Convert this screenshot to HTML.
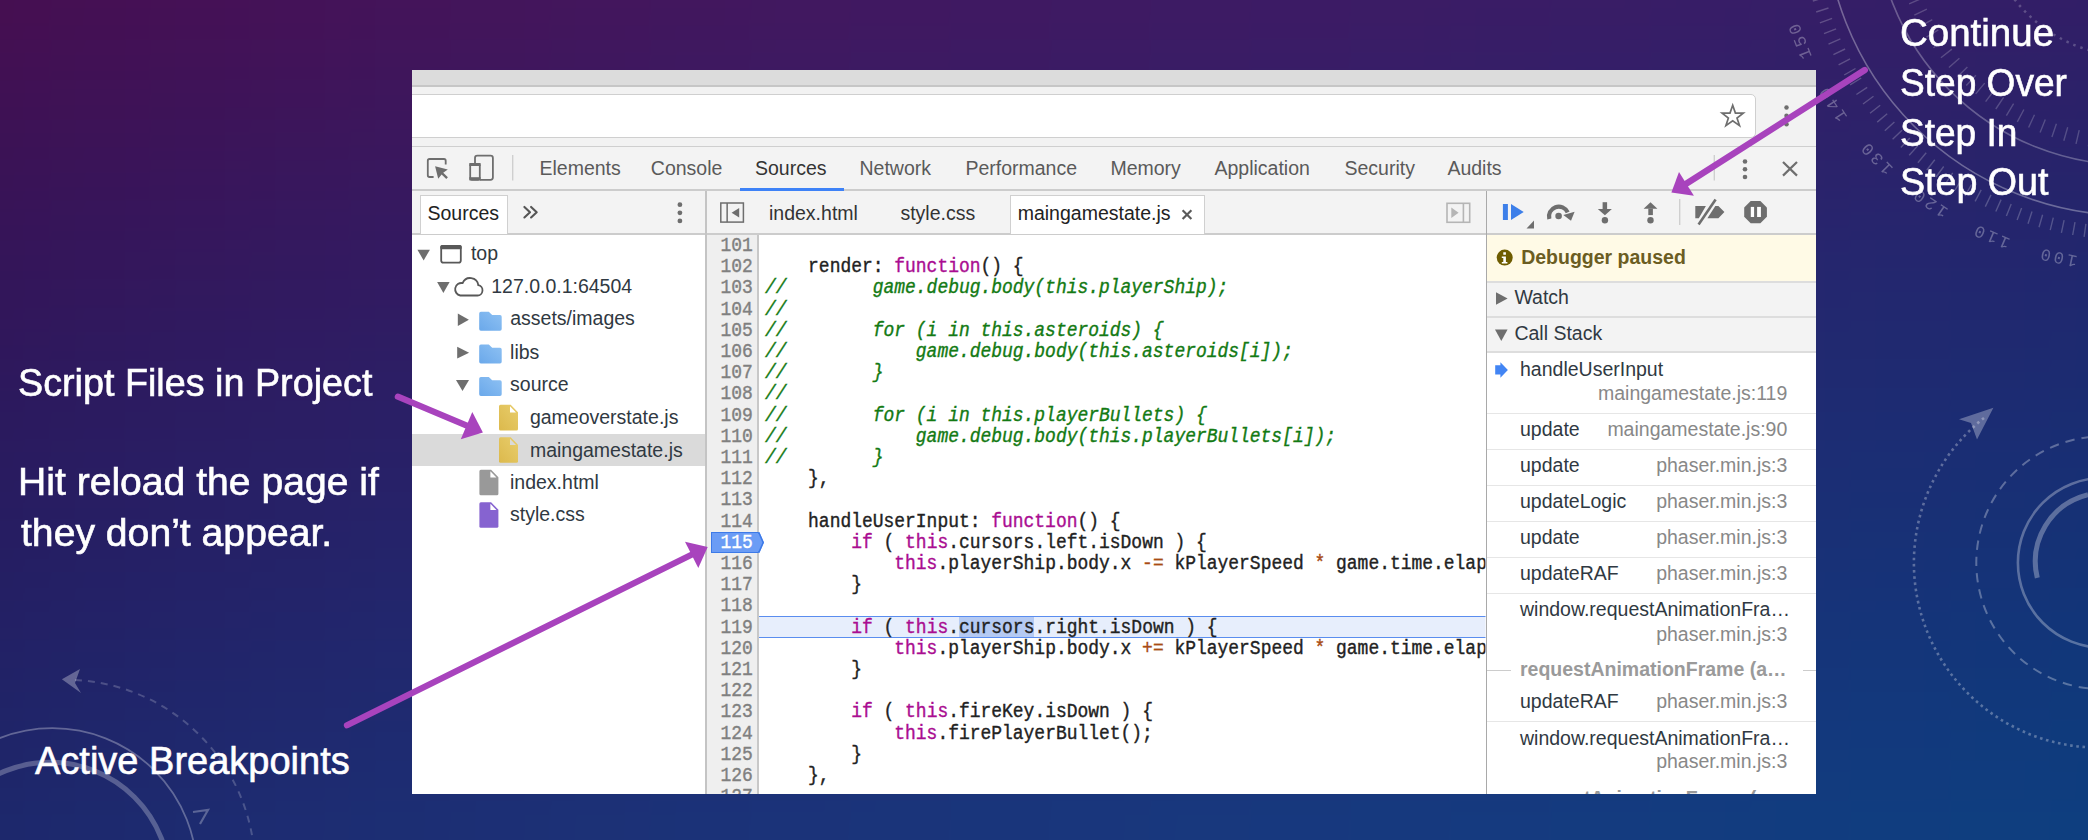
<!DOCTYPE html>
<html><head><meta charset="utf-8">
<style>
*{box-sizing:border-box;margin:0;padding:0}
html,body{width:2088px;height:840px;overflow:hidden}
body{position:relative;font-family:"Liberation Sans",sans-serif;
 background:linear-gradient(168deg,#3f1052 0%,#3e1762 20%,#2f1c66 38%,#241f68 50%,#1f2a6e 64%,#163478 75%,#13387c 82%,#133a7e 100%);}
.a{position:absolute}
.t{position:absolute;white-space:nowrap;line-height:1}
#dt{position:absolute;left:0;top:0;width:2088px;height:840px;clip-path:inset(70px 272px 46px 412px)}
.ui{font-size:19.5px;color:#303942}
.slide{position:absolute;white-space:nowrap;color:#fff;line-height:1;transform-origin:0 0;-webkit-text-stroke:0.6px #fff}
.cl{position:absolute;left:765px;font:17.97px/21.2px "Liberation Mono",monospace;white-space:pre;color:#222;-webkit-text-stroke:0.35px currentColor;margin-top:0.5px;transform:scaleY(1.12);transform-origin:0 15.3px}
.ln{position:absolute;left:700px;width:52.75px;text-align:right;font:17.97px/21.2px "Liberation Mono",monospace;white-space:pre;color:#808080;-webkit-text-stroke:0.35px currentColor;margin-top:0.5px;transform:scaleY(1.12);transform-origin:0 15.3px}
.k{color:#aa0d91}.c{color:#137a13;font-style:italic}.o{color:#a84b14}
#bg i{position:absolute;left:0;width:2400px;height:40px;display:block}
</style></head><body>

<div id="bg" style="position:absolute;left:-100px;top:-120px;width:2400px;height:1080px;filter:blur(22px)"><i style="top:0px;background:linear-gradient(to right,#460e51 0px,#460e51 100px,#460f53 200px,#461155 300px,#451257 400px,#451359 500px,#44145b 600px,#44155c 700px,#43165e 800px,#42175f 900px,#411860 1000px,#401961 1100px,#3f1962 1200px,#3e1a63 1300px,#3d1b64 1400px,#3c1b65 1500px,#3b1c65 1600px,#3a1c66 1700px,#381d66 1800px,#371d66 1900px,#351d66 2000px,#341e66 2100px,#321e66 2200px,#321e66 2300px,#321e66 2400px)"></i><i style="top:40px;background:linear-gradient(to right,#460e51 0px,#460e51 100px,#460f53 200px,#461155 300px,#451257 400px,#451359 500px,#44145b 600px,#44155c 700px,#43165e 800px,#42175f 900px,#411860 1000px,#401961 1100px,#3f1962 1200px,#3e1a63 1300px,#3d1b64 1400px,#3c1b65 1500px,#3b1c65 1600px,#3a1c66 1700px,#381d66 1800px,#371d66 1900px,#351d66 2000px,#341e66 2100px,#321e66 2200px,#321e66 2300px,#321e66 2400px)"></i><i style="top:80px;background:linear-gradient(to right,#460e51 0px,#460e51 100px,#460f53 200px,#461155 300px,#451257 400px,#451359 500px,#44145b 600px,#44155c 700px,#43165e 800px,#42175f 900px,#411860 1000px,#401961 1100px,#3f1962 1200px,#3e1a63 1300px,#3d1b64 1400px,#3c1b65 1500px,#3b1c65 1600px,#3a1c66 1700px,#381d66 1800px,#371d66 1900px,#351d66 2000px,#341e66 2100px,#321e66 2200px,#321e66 2300px,#321e66 2400px)"></i><i style="top:120px;background:linear-gradient(to right,#450f51 0px,#450f51 100px,#441054 200px,#441156 300px,#441258 400px,#43145a 500px,#43155b 600px,#42165d 700px,#41175e 800px,#411860 900px,#401861 1000px,#3f1962 1100px,#3e1a63 1200px,#3d1b64 1300px,#3c1b65 1400px,#3b1c65 1500px,#391c66 1600px,#381d66 1700px,#371d67 1800px,#351e67 1900px,#341e67 2000px,#321e67 2100px,#311e67 2200px,#311e67 2300px,#311e67 2400px)"></i><i style="top:160px;background:linear-gradient(to right,#421053 0px,#421053 100px,#411155 200px,#411257 300px,#411359 400px,#40155b 500px,#40165c 600px,#3f175e 700px,#3e1860 800px,#3e1961 900px,#3d1a62 1000px,#3c1a63 1100px,#3b1b64 1200px,#3a1c65 1300px,#391c66 1400px,#381d67 1500px,#361e67 1600px,#351e68 1700px,#341f68 1800px,#321f68 1900px,#311f68 2000px,#2f2068 2100px,#2e2068 2200px,#2e2068 2300px,#2e2068 2400px)"></i><i style="top:200px;background:linear-gradient(to right,#3f1154 0px,#3f1154 100px,#3f1256 200px,#3e1358 300px,#3e145a 400px,#3d165c 500px,#3d175e 600px,#3c185f 700px,#3c1961 800px,#3b1a62 900px,#3a1b63 1000px,#391b64 1100px,#381c65 1200px,#371d66 1300px,#361e67 1400px,#351e68 1500px,#341f68 1600px,#321f69 1700px,#312069 1800px,#302069 1900px,#2e2169 2000px,#2d2169 2100px,#2b2169 2200px,#2b2169 2300px,#2b2169 2400px)"></i><i style="top:240px;background:linear-gradient(to right,#3c1255 0px,#3c1255 100px,#3c1357 200px,#3b1459 300px,#3b165b 400px,#3b175d 500px,#3a185f 600px,#391960 700px,#391a62 800px,#381b63 900px,#371c64 1000px,#361d66 1100px,#351d67 1200px,#341e67 1300px,#331f68 1400px,#322069 1500px,#312069 1600px,#30216a 1700px,#2e216a 1800px,#2d226a 1900px,#2c226a 2000px,#2a226a 2100px,#29226a 2200px,#29226a 2300px,#29226a 2400px)"></i><i style="top:280px;background:linear-gradient(to right,#391356 0px,#391356 100px,#391459 200px,#39155b 300px,#38175d 400px,#38185e 500px,#371960 600px,#371a62 700px,#361b63 800px,#351c64 900px,#351d66 1000px,#341e67 1100px,#331f68 1200px,#321f69 1300px,#312069 1400px,#30216a 1500px,#2f216b 1600px,#2d226b 1700px,#2c226b 1800px,#2b236b 1900px,#29236c 2000px,#27246b 2100px,#26246b 2200px,#26246b 2300px,#26246b 2400px)"></i><i style="top:320px;background:linear-gradient(to right,#371458 0px,#371458 100px,#36155a 200px,#36165c 300px,#36185e 400px,#351960 500px,#351a61 600px,#341b63 700px,#341c64 800px,#331d66 900px,#321e67 1000px,#311f68 1100px,#302069 1200px,#2f216a 1300px,#2e216b 1400px,#2d226b 1500px,#2c236c 1600px,#2b236c 1700px,#2a246c 1800px,#28246d 1900px,#27256d 2000px,#25256d 2100px,#24256c 2200px,#24256c 2300px,#24256c 2400px)"></i><i style="top:360px;background:linear-gradient(to right,#341559 0px,#341559 100px,#34165b 200px,#34185d 300px,#33195f 400px,#331a61 500px,#321b63 600px,#321c64 700px,#311e66 800px,#311f67 900px,#302068 1000px,#2f2069 1100px,#2e216a 1200px,#2d226b 1300px,#2c236c 1400px,#2b236c 1500px,#2a246d 1600px,#29256d 1700px,#27256e 1800px,#26266e 1900px,#24266e 2000px,#23266e 2100px,#21276e 2200px,#21276e 2300px,#21276e 2400px)"></i><i style="top:400px;background:linear-gradient(to right,#32165a 0px,#32165a 100px,#32175c 200px,#31195e 300px,#311a60 400px,#311b62 500px,#301d64 600px,#301e65 700px,#2f1f67 800px,#2e2068 900px,#2e2169 1000px,#2d226a 1100px,#2c236b 1200px,#2b236c 1300px,#2a246d 1400px,#29256e 1500px,#28256e 1600px,#26266f 1700px,#25276f 1800px,#24276f 1900px,#22286f 2000px,#21286f 2100px,#1f286f 2200px,#1f286f 2300px,#1f286f 2400px)"></i><i style="top:440px;background:linear-gradient(to right,#30175b 0px,#30175b 100px,#2f195e 200px,#2f1a60 300px,#2f1b62 400px,#2e1d63 500px,#2e1e65 600px,#2d1f67 700px,#2d2068 800px,#2c2169 900px,#2b226b 1000px,#2b236c 1100px,#2a246d 1200px,#29256e 1300px,#28266e 1400px,#27266f 1500px,#25276f 1600px,#242870 1700px,#232870 1800px,#222970 1900px,#202970 2000px,#1f2970 2100px,#1d2a70 2200px,#1d2a70 2300px,#1d2a70 2400px)"></i><i style="top:480px;background:linear-gradient(to right,#2d185d 0px,#2d185d 100px,#2d1a5f 200px,#2d1b61 300px,#2d1d63 400px,#2c1e65 500px,#2c1f66 600px,#2b2068 700px,#2b2169 800px,#2a226b 900px,#29236c 1000px,#29246d 1100px,#28256e 1200px,#27266f 1300px,#262770 1400px,#252870 1500px,#232871 1600px,#222971 1700px,#212a71 1800px,#202a71 1900px,#1e2a71 2000px,#1d2b71 2100px,#1b2b71 2200px,#1b2b71 2300px,#1b2b71 2400px)"></i><i style="top:520px;background:linear-gradient(to right,#2b1a5e 0px,#2b1a5e 100px,#2b1b60 200px,#2b1d62 300px,#2b1e64 400px,#2a1f66 500px,#2a2068 600px,#292269 700px,#29236b 800px,#28246c 900px,#27256d 1000px,#27266e 1100px,#26276f 1200px,#252870 1300px,#242871 1400px,#232971 1500px,#222a72 1600px,#202a72 1700px,#1f2b73 1800px,#1e2c73 1900px,#1c2c73 2000px,#1b2c73 2100px,#1a2d72 2200px,#1a2d72 2300px,#1a2d72 2400px)"></i><i style="top:560px;background:linear-gradient(to right,#291b5f 0px,#291b5f 100px,#291c62 200px,#291e64 300px,#291f65 400px,#282067 500px,#282269 600px,#27236a 700px,#27246c 800px,#26256d 900px,#26266e 1000px,#25276f 1100px,#242870 1200px,#232971 1300px,#222a72 1400px,#212b73 1500px,#202b73 1600px,#1f2c73 1700px,#1d2d74 1800px,#1c2d74 1900px,#1b2e74 2000px,#192e74 2100px,#182e74 2200px,#182e74 2300px,#182e74 2400px)"></i><i style="top:600px;background:linear-gradient(to right,#281c61 0px,#281c61 100px,#281e63 200px,#271f65 300px,#272167 400px,#272269 500px,#26236a 600px,#26246c 700px,#25266d 800px,#25276e 900px,#242870 1000px,#232971 1100px,#222a72 1200px,#212b73 1300px,#202b73 1400px,#1f2c74 1500px,#1e2d74 1600px,#1d2e75 1700px,#1c2e75 1800px,#1a2f75 1900px,#192f75 2000px,#183075 2100px,#163075 2200px,#163075 2300px,#163075 2400px)"></i><i style="top:640px;background:linear-gradient(to right,#261d62 0px,#261d62 100px,#261f64 200px,#262066 300px,#252268 400px,#25236a 500px,#25256c 600px,#24266d 700px,#24276e 800px,#232870 900px,#222971 1000px,#212a72 1100px,#212b73 1200px,#202c74 1300px,#1f2d75 1400px,#1e2e75 1500px,#1d2e76 1600px,#1b2f76 1700px,#1a3076 1800px,#193076 1900px,#183176 2000px,#163176 2100px,#153276 2200px,#153276 2300px,#153276 2400px)"></i><i style="top:680px;background:linear-gradient(to right,#241f63 0px,#241f63 100px,#242066 200px,#242268 300px,#242369 400px,#23256b 500px,#23266d 600px,#23276e 700px,#222870 800px,#212a71 900px,#212b72 1000px,#202c73 1100px,#1f2d74 1200px,#1e2e75 1300px,#1d2e76 1400px,#1c2f76 1500px,#1b3077 1600px,#1a3177 1700px,#193178 1800px,#183278 1900px,#163278 2000px,#153378 2100px,#133377 2200px,#133377 2300px,#133377 2400px)"></i><i style="top:720px;background:linear-gradient(to right,#232065 0px,#232065 100px,#232267 200px,#232369 300px,#22256b 400px,#22266d 500px,#22276e 600px,#212970 700px,#212a71 800px,#202b72 900px,#1f2c74 1000px,#1f2d75 1100px,#1e2e76 1200px,#1d2f76 1300px,#1c3077 1400px,#1b3178 1500px,#1a3278 1600px,#193279 1700px,#183379 1800px,#163479 1900px,#153479 2000px,#133579 2100px,#123579 2200px,#123579 2300px,#123579 2400px)"></i><i style="top:760px;background:linear-gradient(to right,#222266 0px,#222266 100px,#212368 200px,#21256a 300px,#21266c 400px,#21286e 500px,#202970 600px,#202a71 700px,#1f2b72 800px,#1f2d74 900px,#1e2e75 1000px,#1d2f76 1100px,#1d3077 1200px,#1c3178 1300px,#1b3278 1400px,#1a3379 1500px,#19337a 1600px,#18347a 1700px,#16357a 1800px,#15357a 1900px,#14367a 2000px,#12367a 2100px,#11377a 2200px,#11377a 2300px,#11377a 2400px)"></i><i style="top:800px;background:linear-gradient(to right,#202367 0px,#202367 100px,#20256a 200px,#20266c 300px,#20286d 400px,#1f296f 500px,#1f2a71 600px,#1f2c72 700px,#1e2d74 800px,#1e2e75 900px,#1d2f76 1000px,#1c3077 1100px,#1b3178 1200px,#1b3279 1300px,#1a337a 1400px,#19347a 1500px,#18357b 1600px,#16367b 1700px,#15367b 1800px,#14377c 1900px,#13387c 2000px,#11387b 2100px,#10397b 2200px,#10397b 2300px,#10397b 2400px)"></i><i style="top:840px;background:linear-gradient(to right,#1f2569 0px,#1f2569 100px,#1f266b 200px,#1f286d 300px,#1f296f 400px,#1e2b71 500px,#1e2c72 600px,#1e2d74 700px,#1d2f75 800px,#1d3076 900px,#1c3178 1000px,#1b3279 1100px,#1a337a 1200px,#1a347a 1300px,#19357b 1400px,#18367c 1500px,#17377c 1600px,#15377c 1700px,#14387d 1800px,#13397d 1900px,#12397d 2000px,#103a7d 2100px,#0f3a7c 2200px,#0f3a7c 2300px,#0f3a7c 2400px)"></i><i style="top:880px;background:linear-gradient(to right,#1e266a 0px,#1e266a 100px,#1e286c 200px,#1e296e 300px,#1e2b70 400px,#1d2c72 500px,#1d2e74 600px,#1d2f75 700px,#1c3077 800px,#1c3178 900px,#1b3379 1000px,#1a347a 1100px,#19357b 1200px,#19367c 1300px,#18377c 1400px,#17387d 1500px,#16387d 1600px,#15397e 1700px,#133a7e 1800px,#123b7e 1900px,#113b7e 2000px,#103c7e 2100px,#0e3c7e 2200px,#0e3c7e 2300px,#0e3c7e 2400px)"></i><i style="top:920px;background:linear-gradient(to right,#1d286c 0px,#1d286c 100px,#1d296e 200px,#1d2b70 300px,#1d2c72 400px,#1c2e73 500px,#1c2f75 600px,#1c3176 700px,#1b3278 800px,#1b3379 900px,#1a347a 1000px,#19357b 1100px,#19367c 1200px,#18387d 1300px,#17387e 1400px,#16397e 1500px,#153a7f 1600px,#143b7f 1700px,#133c7f 1800px,#113c7f 1900px,#103d7f 2000px,#0f3e7f 2100px,#0e3e7f 2200px,#0e3e7f 2300px,#0e3e7f 2400px)"></i><i style="top:960px;background:linear-gradient(to right,#1d286c 0px,#1d286c 100px,#1d2a6e 200px,#1d2c70 300px,#1c2d72 400px,#1c2f74 500px,#1c3076 600px,#1b3177 700px,#1b3379 800px,#1a347a 900px,#1a357b 1000px,#19367c 1100px,#18377d 1200px,#17387e 1300px,#17397e 1400px,#163a7f 1500px,#153b7f 1600px,#143c80 1700px,#123d80 1800px,#113d80 1900px,#103e80 2000px,#0e3f80 2100px,#0d3f80 2200px,#0d3f80 2300px,#0d3f80 2400px)"></i><i style="top:1000px;background:linear-gradient(to right,#1d286c 0px,#1d286c 100px,#1d2a6e 200px,#1d2c70 300px,#1c2d72 400px,#1c2f74 500px,#1c3076 600px,#1b3177 700px,#1b3379 800px,#1a347a 900px,#1a357b 1000px,#19367c 1100px,#18377d 1200px,#17387e 1300px,#17397e 1400px,#163a7f 1500px,#153b7f 1600px,#143c80 1700px,#123d80 1800px,#113d80 1900px,#103e80 2000px,#0e3f80 2100px,#0d3f80 2200px,#0d3f80 2300px,#0d3f80 2400px)"></i></div>
<svg id="deco" class="a" style="left:0;top:0" width="2088" height="840">
 <g fill="none" stroke="#fff">
  <circle cx="2130" cy="-90" r="305.5" stroke-width="1.6" opacity="0.32"/>
  <circle cx="2130" cy="-90" r="255" stroke-width="1.6" opacity="0.28"/>
  <circle cx="2130" cy="-90" r="146" stroke-width="2.5" stroke-dasharray="2.5 5" opacity="0.22"/>
  <path d="M1816.1 -45.9L1803.2 -44.1 M1817.8 -35.0L1805.0 -32.7 M1819.9 -24.1L1807.2 -21.4 M1822.4 -13.3L1809.8 -10.2 M1825.3 -2.6L1812.8 1.0 M1828.5 8.0L1816.2 12.0 M1832.1 18.4L1819.9 22.9 M1836.1 28.8L1824.0 33.6 M1840.4 38.9L1828.5 44.2 M1845.1 49.0L1833.4 54.7 M1850.1 58.8L1838.6 64.9 M1855.5 68.5L1844.2 75.0 M1861.2 78.0L1850.1 84.9 M1867.2 87.3L1856.4 94.5 M1873.5 96.3L1863.0 104.0 M1880.2 105.2L1870.0 113.2 M1887.2 113.8L1877.2 122.1 M1894.4 122.1L1884.8 130.8 M1902.0 130.2L1892.6 139.2 M1909.8 138.0L1900.8 147.4 M1917.9 145.6L1909.2 155.2 M1926.2 152.8L1917.9 162.8 M1934.8 159.8L1926.8 170.0 M1943.7 166.5L1936.0 177.0 M1952.7 172.8L1945.5 183.6 M1962.0 178.8L1955.1 189.9 M1971.5 184.5L1965.0 195.8 M1981.2 189.9L1975.1 201.4 M1991.0 194.9L1985.3 206.6 M2001.1 199.6L1995.8 211.5 M2011.2 203.9L2006.4 216.0 M2021.6 207.9L2017.1 220.1 M2032.0 211.5L2028.0 223.8 M2042.6 214.7L2039.0 227.2 M2053.3 217.6L2050.2 230.2 M2064.1 220.1L2061.4 232.8 M2075.0 222.2L2072.7 235.0 M2085.9 223.9L2084.1 236.8" stroke-width="1.4" opacity="0.22"/>
  <path d="M1904.1 -82.1L1890.1 -81.6 M1904.9 -70.3L1890.9 -69.1 M1906.2 -58.5L1892.3 -56.6 M1908.2 -46.9L1894.4 -44.2 M1910.7 -35.3L1897.1 -31.9 M1913.9 -23.9L1900.5 -19.8 M1917.6 -12.7L1904.5 -7.9 M1922.0 -1.7L1909.1 3.8 M1926.9 9.1L1914.3 15.2 M1932.3 19.6L1920.1 26.4 M1938.3 29.8L1926.5 37.2 M1944.9 39.6L1933.4 47.7 M1951.9 49.1L1940.9 57.8 M1959.4 58.3L1948.9 67.5 M1967.4 67.0L1957.4 76.7 M1975.9 75.3L1966.3 85.5 M1984.7 83.1L1975.7 93.9 M1994.0 90.5L1985.6 101.7 M2003.6 97.4L1995.8 109.0 M2013.6 103.7L2006.4 115.7 M2023.9 109.5L2017.3 121.9 M2034.5 114.8L2028.6 127.5 M2045.3 119.5L2040.1 132.5 M2056.4 123.7L2051.9 136.9 M2067.7 127.2L2063.8 140.7 M2079.2 130.2L2076.0 143.8 M2090.8 132.6L2088.3 146.4 M2102.5 134.3L2100.8 148.2" stroke-width="1.4" opacity="0.2"/>
  <circle cx="2102.7" cy="562.8" r="84.8" stroke-width="2.6" opacity="0.3"/>
  <path d="M2037.3 577.9A69 69 0 0 1 2088 494.6" stroke-width="5" opacity="0.3"/>
  <circle cx="2102.7" cy="562.8" r="126.4" stroke-width="2" stroke-dasharray="9.4 7" opacity="0.3"/>
  <path d="M1984 418A184.7 184.7 0 0 0 2102.7 747.5" stroke-width="2.6" stroke-dasharray="2.6 3.6" opacity="0.3"/>
  <circle cx="52.4" cy="872.7" r="144.5" stroke-width="1.8" opacity="0.3"/>
  <circle cx="50.1" cy="881.7" r="119.4" stroke-width="5" opacity="0.26"/>
  <path d="M75 680A189 189 0 0 1 255 869" stroke-width="2" stroke-dasharray="7 6" opacity="0.2"/>
  <path d="M193 812L208 810L200 824" stroke-width="2.2" opacity="0.28"/>
 </g>
 <g fill="#fff" opacity="0.3">
  <path d="M1993.4 407.7L1959 419.3L1971 423L1977 439.4Z"/>
  <path d="M61.9 679.3L80 669L75 683L81 693Z"/>
 </g>
 <g fill="#fff" opacity="0.3" font-family="Liberation Mono" font-size="17"><text x="1800.6" y="39.7" transform="rotate(248.5 1800.6 39.7)" text-anchor="middle" dominant-baseline="middle" letter-spacing="3">150</text><text x="1833.1" y="102.8" transform="rotate(237.0 1833.1 102.8)" text-anchor="middle" dominant-baseline="middle" letter-spacing="3">140</text><text x="1876.6" y="157.2" transform="rotate(225.7 1876.6 157.2)" text-anchor="middle" dominant-baseline="middle" letter-spacing="3">130</text><text x="1930.0" y="202.1" transform="rotate(214.4 1930.0 202.1)" text-anchor="middle" dominant-baseline="middle" letter-spacing="3">120</text><text x="1991.1" y="235.6" transform="rotate(203.1 1991.1 235.6)" text-anchor="middle" dominant-baseline="middle" letter-spacing="3">110</text><text x="2057.6" y="256.5" transform="rotate(191.8 2057.6 256.5)" text-anchor="middle" dominant-baseline="middle" letter-spacing="3">100</text></g>
</svg>

<!-- slide texts -->
<div class="slide" style="left:18.3px;top:363.8px;font-size:38px;transform:scaleX(0.993)">Script Files in Project</div>
<div class="slide" style="left:17.8px;top:462.8px;font-size:38px;transform:scaleX(1.029)">Hit reload the page if</div>
<div class="slide" style="left:20.5px;top:513.8px;font-size:38px;transform:scaleX(1.03)">they don’t appear.</div>
<div class="slide" style="left:35px;top:741.8px;font-size:38px;transform:scaleX(1.0)">Active Breakpoints</div>
<div class="slide" style="left:1900px;top:14.1px;font-size:38px;transform:scaleX(1.013)">Continue</div>
<div class="slide" style="left:1900px;top:64.1px;font-size:38px;transform:scaleX(0.976)">Step Over</div>
<div class="slide" style="left:1900px;top:114.1px;font-size:38px;transform:scaleX(0.975)">Step In</div>
<div class="slide" style="left:1900px;top:162.8px;font-size:38px;transform:scaleX(0.99)">Step Out</div>

<div id="dt">
 <div class="a" style="left:412px;top:70px;width:1404px;height:724px;background:#fff"></div>
 <!-- chrome top -->
 <div class="a" style="left:412px;top:70px;width:1404px;height:15px;background:#dcdcdc"></div>
 <div class="a" style="left:412px;top:85px;width:1404px;height:1.5px;background:#c6c6c6"></div>
 <div class="a" style="left:412px;top:86.5px;width:1404px;height:60px;background:#f2f2f2"></div>
 <div class="a" style="left:380px;top:94px;width:1376px;height:44px;background:#fff;border:1px solid #cfcfcf;border-radius:5px"></div>
 <div class="a" style="left:412px;top:146px;width:1404px;height:1px;background:#cfcfcf"></div>
 <!-- toolbar -->
 <div class="a" style="left:412px;top:147px;width:1404px;height:42px;background:#f3f3f3"></div>
 <div class="a" style="left:412px;top:189px;width:1404px;height:1.5px;background:#cccccc"></div>
 <div class="a" style="left:739.5px;top:188px;width:104px;height:2.5px;background:#3e82f7"></div>
 <div class="t ui" style="left:539.5px;top:158.5px;color:#5a5a5a">Elements</div>
 <div class="t ui" style="left:650.8px;top:158.5px;color:#5a5a5a">Console</div>
 <div class="t ui" style="left:755px;top:158.5px;color:#333">Sources</div>
 <div class="t ui" style="left:859.5px;top:158.5px;color:#5a5a5a">Network</div>
 <div class="t ui" style="left:965.4px;top:158.5px;color:#5a5a5a">Performance</div>
 <div class="t ui" style="left:1110.4px;top:158.5px;color:#5a5a5a">Memory</div>
 <div class="t ui" style="left:1214.5px;top:158.5px;color:#5a5a5a">Application</div>
 <div class="t ui" style="left:1344.5px;top:158.5px;color:#5a5a5a">Security</div>
 <div class="t ui" style="left:1447.4px;top:158.5px;color:#5a5a5a">Audits</div>

 <!-- second header row -->
 <div class="a" style="left:412px;top:190.5px;width:1404px;height:43px;background:#f3f3f3"></div>
 <div class="a" style="left:412px;top:233px;width:1404px;height:1.5px;background:#cccccc"></div>
 <div class="a" style="left:419.5px;top:194.5px;width:88.5px;height:39px;background:#fff;border:1px solid #d0d0d0;border-bottom:none"></div>
 <div class="t ui" style="left:427.5px;top:204.2px;color:#222">Sources</div>
 <div class="a" style="left:1010px;top:194.5px;width:194.5px;height:39px;background:#fff;border:1px solid #d0d0d0;border-bottom:none"></div>
 <div class="t ui" style="left:769px;top:204.2px;color:#333">index.html</div>
 <div class="t ui" style="left:900.4px;top:204.2px;color:#333">style.css</div>
 <div class="t ui" style="left:1017.7px;top:204.2px;color:#222">maingamestate.js</div>

 <!-- panel dividers -->
 <div class="a" style="left:705px;top:190.5px;width:2px;height:604px;background:#c4c4c4"></div>
 <div class="a" style="left:1485.5px;top:190.5px;width:1.6px;height:604px;background:#a9a9a9"></div>

 <!-- left tree -->
 <div class="a" style="left:412px;top:434px;width:293px;height:31.8px;background:#dadada"></div>
 <div class="t ui" style="left:470.9px;top:244.3px">top</div>
 <div class="t ui" style="left:491.2px;top:277.2px">127.0.0.1:64504</div>
 <div class="t ui" style="left:510.2px;top:308.8px">assets/images</div>
 <div class="t ui" style="left:510.1px;top:342.8px">libs</div>
 <div class="t ui" style="left:510.1px;top:375.2px">source</div>
 <div class="t ui" style="left:529.9px;top:408.1px">gameoverstate.js</div>
 <div class="t ui" style="left:529.9px;top:440.9px">maingamestate.js</div>
 <div class="t ui" style="left:510px;top:473.1px">index.html</div>
 <div class="t ui" style="left:510px;top:505.2px">style.css</div>

 <!-- gutter -->
 <div class="a" style="left:707px;top:234.5px;width:50.5px;height:560px;background:#efefef"></div>
 <div class="a" style="left:757.3px;top:234.5px;width:1.8px;height:560px;background:#c8c8c8"></div>
 <div class="a" style="left:711.4px;top:531.9px;width:47px;height:20.7px;background:#6b9cf5;border:1.5px solid #3d7ae8;border-right:none"></div>
 <svg class="a" style="left:757.5px;top:531.9px" width="7" height="21" viewBox="0 0 7 20.7"><path d="M0 0H1.5L6 10.35L1.5 20.7H0Z" fill="#6b9cf5"/><path d="M0 0.75H1L5.2 10.35L1 19.95H0" fill="none" stroke="#3d7ae8" stroke-width="1.5"/></svg>
 <div id="lnwrap">
<div class="ln" style="top:235.59px">101</div>
<div class="ln" style="top:256.79px">102</div>
<div class="ln" style="top:277.99px">103</div>
<div class="ln" style="top:299.19px">104</div>
<div class="ln" style="top:320.39px">105</div>
<div class="ln" style="top:341.59px">106</div>
<div class="ln" style="top:362.79px">107</div>
<div class="ln" style="top:383.99px">108</div>
<div class="ln" style="top:405.19px">109</div>
<div class="ln" style="top:426.39px">110</div>
<div class="ln" style="top:447.59px">111</div>
<div class="ln" style="top:468.79px">112</div>
<div class="ln" style="top:489.99px">113</div>
<div class="ln" style="top:511.19px">114</div>
<div class="ln" style="top:532.39px;color:#fff">115</div>
<div class="ln" style="top:553.59px">116</div>
<div class="ln" style="top:574.79px">117</div>
<div class="ln" style="top:595.99px">118</div>
<div class="ln" style="top:617.19px">119</div>
<div class="ln" style="top:638.39px">120</div>
<div class="ln" style="top:659.59px">121</div>
<div class="ln" style="top:680.79px">122</div>
<div class="ln" style="top:701.99px">123</div>
<div class="ln" style="top:723.19px">124</div>
<div class="ln" style="top:744.39px">125</div>
<div class="ln" style="top:765.59px">126</div>
<div class="ln" style="top:786.79px">127</div>
<div class="ln" style="top:807.99px">128</div>
 </div>
 <!-- code -->
 <div class="a" style="left:0;top:0;width:2088px;height:840px;clip-path:inset(234.5px 602.5px 46px 759px)">
  <div class="a" style="left:758px;top:615.5px;width:740px;height:22.5px;background:#e7eefc;border:1.5px solid #5a8def"></div>
  <div class="a" style="left:959px;top:617px;width:74.8px;height:19.5px;background:#b5caf3"></div>
<div class="cl" style="top:235.59px"></div>
<div class="cl" style="top:256.79px">    render: <span class="k">function</span>() {</div>
<div class="cl" style="top:277.99px"><span class="c">//        game.debug.body(this.playerShip);</span></div>
<div class="cl" style="top:299.19px"><span class="c">//</span></div>
<div class="cl" style="top:320.39px"><span class="c">//        for (i in this.asteroids) {</span></div>
<div class="cl" style="top:341.59px"><span class="c">//            game.debug.body(this.asteroids[i]);</span></div>
<div class="cl" style="top:362.79px"><span class="c">//        }</span></div>
<div class="cl" style="top:383.99px"><span class="c">//</span></div>
<div class="cl" style="top:405.19px"><span class="c">//        for (i in this.playerBullets) {</span></div>
<div class="cl" style="top:426.39px"><span class="c">//            game.debug.body(this.playerBullets[i]);</span></div>
<div class="cl" style="top:447.59px"><span class="c">//        }</span></div>
<div class="cl" style="top:468.79px">    },</div>
<div class="cl" style="top:489.99px"></div>
<div class="cl" style="top:511.19px">    handleUserInput: <span class="k">function</span>() {</div>
<div class="cl" style="top:532.39px">        <span class="k">if</span> ( <span class="k">this</span>.cursors.left.isDown ) {</div>
<div class="cl" style="top:553.59px">            <span class="k">this</span>.playerShip.body.x <span class="o">-=</span> kPlayerSpeed <span class="o">*</span> game.time.elapsedMS;</div>
<div class="cl" style="top:574.79px">        }</div>
<div class="cl" style="top:595.99px"></div>
<div class="cl" style="top:617.19px">        <span class="k">if</span> ( <span class="k">this</span>.<span class="s">cursors</span>.right.isDown ) {</div>
<div class="cl" style="top:638.39px">            <span class="k">this</span>.playerShip.body.x <span class="o">+=</span> kPlayerSpeed <span class="o">*</span> game.time.elapsedMS;</div>
<div class="cl" style="top:659.59px">        }</div>
<div class="cl" style="top:680.79px"></div>
<div class="cl" style="top:701.99px">        <span class="k">if</span> ( <span class="k">this</span>.fireKey.isDown ) {</div>
<div class="cl" style="top:723.19px">            <span class="k">this</span>.firePlayerBullet();</div>
<div class="cl" style="top:744.39px">        }</div>
<div class="cl" style="top:765.59px">    },</div>
<div class="cl" style="top:786.79px"></div>
<div class="cl" style="top:807.99px"></div>
 </div>

 <!-- right sidebar -->
 <div class="a" style="left:1487px;top:234.5px;width:329px;height:46.5px;background:#fffae6"></div>
 <div class="a" style="left:1487px;top:281px;width:329px;height:1.6px;background:#ddd"></div>
 <div class="a" style="left:1487px;top:282.6px;width:329px;height:33.4px;background:#f3f3f3"></div>
 <div class="a" style="left:1487px;top:316px;width:329px;height:1.6px;background:#ddd"></div>
 <div class="a" style="left:1487px;top:317.6px;width:329px;height:33.4px;background:#f3f3f3"></div>
 <div class="a" style="left:1487px;top:351px;width:329px;height:1.6px;background:#ddd"></div>
 <div class="t ui" style="left:1521.2px;top:248.4px;font-weight:bold;color:#6b5d22">Debugger paused</div>
 <div class="t ui" style="left:1514.4px;top:288.2px">Watch</div>
 <div class="t ui" style="left:1514.4px;top:324.4px">Call Stack</div>
<!-- icons -->
 <svg class="a" style="left:0;top:0" width="2088" height="840" viewBox="0 0 2088 840">
  <g fill="none" stroke="#6e6e6e" stroke-width="1.8">
   <!-- inspect -->
   <path d="M433.6 177H429.5Q427.8 177 427.8 175.3V160.7Q427.8 159 429.5 159H444Q445.7 159 445.7 160.7V164.6"/>
   <!-- device -->
   <path d="M475 164V158Q475 155.7 477.3 155.7H490.6Q492.9 155.7 492.9 158V177.6Q492.9 179.8 490.6 179.8H480"/>
   <rect x="470.2" y="163.8" width="9.6" height="16" rx="1.8"/>
  </g>
  <path d="M435.1 166.3L447.8 169.4L443.2 172.8L447.9 177.3L446.3 178.9L441.6 174.5L438.2 178.7Z" fill="#6e6e6e"/>
  <rect x="469.3" y="163" width="11.3" height="3" fill="#6e6e6e"/>
  <rect x="469.3" y="177.2" width="11.3" height="3.2" fill="#6e6e6e"/>
  <rect x="512" y="155" width="1.4" height="25.5" fill="#cfcfcf"/>
  <rect x="1713.6" y="155" width="1.4" height="25.5" fill="#cfcfcf"/>
  <!-- toolbar 3dot & close -->
  <g fill="#6e6e6e"><circle cx="1745" cy="161.5" r="2.3"/><circle cx="1745" cy="169.3" r="2.3"/><circle cx="1745" cy="177" r="2.3"/></g>
  <path d="M1783 162L1797 175.6M1797 162L1783 175.6" stroke="#6e6e6e" stroke-width="2.2"/>
  <!-- omnibox star & dots -->
  <path d="M1732.7 105.3L1735.4 113.1H1743.3L1737 118L1739.5 125.6L1732.7 120.8L1725.9 125.6L1728.4 118L1722.1 113.1H1730Z" fill="none" stroke="#6e6e6e" stroke-width="1.7" stroke-linejoin="miter"/>
  <g fill="#6e6e6e"><circle cx="1786.5" cy="107.6" r="2.25"/><circle cx="1786.5" cy="115.8" r="2.25"/><circle cx="1786.5" cy="124.2" r="2.25"/></g>
  <!-- sources header -->
  <path d="M524.4 206.9L530 212.2L524.4 217.5M531.1 206.9L536.7 212.2L531.1 217.5" fill="none" stroke="#555" stroke-width="2.1" stroke-linecap="round" stroke-linejoin="round"/>
  <g fill="#6e6e6e"><circle cx="679.9" cy="204.7" r="2.4"/><circle cx="679.9" cy="212.8" r="2.4"/><circle cx="679.9" cy="220.9" r="2.4"/></g>
  <rect x="720.8" y="203" width="22.6" height="19.1" fill="none" stroke="#6e6e6e" stroke-width="1.5"/>
  <rect x="726.4" y="203" width="1.5" height="19.1" fill="#6e6e6e"/>
  <path d="M731.6 212.7L739.2 208.1V217.4Z" fill="#6e6e6e"/>
  <path d="M1182.6 210.2L1191.4 219M1191.4 210.2L1182.6 219" stroke="#5a5a5a" stroke-width="2.2"/>
  <!-- right panel toggle disabled -->
  <rect x="1447" y="203.3" width="22.7" height="19" fill="none" stroke="#b5b5b5" stroke-width="1.6"/>
  <rect x="1462.6" y="203.3" width="1.6" height="19" fill="#b5b5b5"/>
  <path d="M1451.3 207.6L1458.6 212.8L1451.3 218Z" fill="#b5b5b5"/>
  <!-- debugger toolbar -->
  <rect x="1502.9" y="204" width="5" height="16" fill="#3d7fe9"/>
  <path d="M1511 204L1523.7 212L1511 220Z" fill="#3d7fe9"/>
  <path d="M1534 220.5V228.4H1526.5Z" fill="#6e6e6e"/>
  <path d="M1549.3 219A9.8 9.8 0 0 1 1567.7 212.4" fill="none" stroke="#6e6e6e" stroke-width="4.2"/>
  <path d="M1563.3 215L1574.6 211.8L1571 220.8Z" fill="#6e6e6e"/>
  <circle cx="1558.6" cy="216" r="3.3" fill="#6e6e6e"/>
  <rect x="1602.6" y="202.2" width="4.5" height="7.2" fill="#6e6e6e"/>
  <path d="M1597.8 209.1H1611.9L1604.9 215.3Z" fill="#6e6e6e"/>
  <circle cx="1604.9" cy="220.2" r="3.2" fill="#6e6e6e"/>
  <path d="M1643.6 208.8H1657.4L1650.5 202.2Z" fill="#6e6e6e"/>
  <rect x="1648.3" y="208.6" width="4.6" height="6.5" fill="#6e6e6e"/>
  <circle cx="1650.5" cy="220.2" r="3.2" fill="#6e6e6e"/>
  <rect x="1679" y="199" width="1.4" height="26" fill="#cfcfcf"/>
  <path d="M1695.3 206H1705.9L1698.8 218.3H1695.3Z M1715.3 206H1718.4L1724.4 212.1L1718.4 218.3H1707.4Z" fill="#6e6e6e"/>
  <path d="M1715.6 199.6L1698.6 224.6" stroke="#6e6e6e" stroke-width="2.6"/>
  <path d="M1750.7 201H1760.4L1766.9 207.5V216.7L1760.4 223.2H1750.7L1744.2 216.7V207.5Z" fill="#6e6e6e"/>
  <rect x="1750.8" y="206.9" width="3.3" height="10.1" fill="#fff"/>
  <rect x="1757.1" y="206.9" width="3.8" height="10.1" fill="#fff"/>
  <!-- tree -->
  <g fill="#6e6e6e">
   <path d="M417.4 249.7H429.9L423.65 260.4Z"/>
   <path d="M437.1 282.1H449.6L443.4 292.9Z"/>
   <path d="M457.8 313.4L468.9 319.65L457.8 325.9Z"/>
   <path d="M457.2 346.7L469.1 352.65L457.2 358.6Z"/>
   <path d="M456 380H469L462.5 391Z"/>
  </g>
  <rect x="441.2" y="245.9" width="19.6" height="16.8" rx="2.2" fill="none" stroke="#585858" stroke-width="1.8"/>
  <rect x="440.3" y="245" width="21.4" height="4.3" rx="1.5" fill="#585858"/>
  <path d="M460.3 295.5H477.5A5.2 5.2 0 0 0 478.3 285.2A8.2 8.2 0 0 0 462.6 283.1A6.2 6.2 0 0 0 460.3 295.5Z" fill="none" stroke="#585858" stroke-width="1.8"/>
  <defs>
   <linearGradient id="fg" x1="0" y1="1" x2="1" y2="0"><stop offset="0" stop-color="#6aa8ea"/><stop offset="1" stop-color="#8ec1f3"/></linearGradient>
   <linearGradient id="yg" x1="0" y1="1" x2="1" y2="0"><stop offset="0" stop-color="#dcb94c"/><stop offset="1" stop-color="#e8cd6c"/></linearGradient>
  </defs>
  <g fill="url(#fg)">
   <path d="M480.9 311.8H488.8L492.2 315H500A1.7 1.7 0 0 1 501.7 316.7V329A1.7 1.7 0 0 1 500 330.7H480.9A1.7 1.7 0 0 1 479.2 329V313.5A1.7 1.7 0 0 1 480.9 311.8Z"/>
   <path d="M480.9 344.5H488.8L492.2 347.7H500A1.7 1.7 0 0 1 501.7 349.4V361.7A1.7 1.7 0 0 1 500 363.4H480.9A1.7 1.7 0 0 1 479.2 361.7V346.2A1.7 1.7 0 0 1 480.9 344.5Z"/>
   <path d="M480.9 377.1H488.8L492.2 380.3H500A1.7 1.7 0 0 1 501.7 382V394.3A1.7 1.7 0 0 1 500 396H480.9A1.7 1.7 0 0 1 479.2 394.3V378.8A1.7 1.7 0 0 1 480.9 377.1Z"/>
  </g>
  <g id="fileic">
   <path d="M500.5 404.8H510.7L518 412.3V428.9A1.5 1.5 0 0 1 516.5 430.4H500.5A1.5 1.5 0 0 1 499 428.9V406.3A1.5 1.5 0 0 1 500.5 404.8Z" fill="url(#yg)"/>
   <path d="M510 406.3V412.5H516Z" fill="#fff"/>
  </g>
  <path d="M500.5 437.2H510.7L518 444.7V461.3A1.5 1.5 0 0 1 516.5 462.8H500.5A1.5 1.5 0 0 1 499 461.3V438.7A1.5 1.5 0 0 1 500.5 437.2Z" fill="url(#yg)"/>
  <path d="M510 438.7V444.9H516Z" fill="#dadada"/>
  <path d="M480.9 469.7H491.1L498.4 477.2V493.8A1.5 1.5 0 0 1 496.9 495.3H480.9A1.5 1.5 0 0 1 479.4 493.8V471.2A1.5 1.5 0 0 1 480.9 469.7Z" fill="#999"/>
  <path d="M490.4 471.2V477.4H496.4Z" fill="#fff"/>
  <path d="M480.9 502.2H491.1L498.4 509.7V526.3A1.5 1.5 0 0 1 496.9 527.8H480.9A1.5 1.5 0 0 1 479.4 526.3V503.7A1.5 1.5 0 0 1 480.9 502.2Z" fill="#8663d0"/>
  <path d="M490.4 503.7V509.9H496.4Z" fill="#fff"/>
  <!-- sidebar icons -->
  <circle cx="1504.7" cy="257.6" r="8" fill="#6e5c00"/>
  <path d="M1503.3 252.3h2.6v2.4h-2.6z M1501.8 256.4h4.1v5.6h1.5v1.5h-5.6v-1.5h1.5v-4.1h-1.5z" fill="#fff"/>
  <path d="M1496 292.3L1507.6 298.5L1496 304.7Z" fill="#6e6e6e"/>
  <path d="M1495 329.5H1507.6L1501.3 341Z" fill="#6e6e6e"/>
  <path d="M1495.2 365.2H1500.4V362.3L1507.9 370.1L1500.4 377.7V374.6H1495.2Z" fill="#4285f4"/>
 </svg>
 <!-- call stack -->
 <div class="a" style="left:1487px;top:412.8px;width:329px;height:1px;background:#e6e6e6"></div>
 <div class="a" style="left:1487px;top:449.1px;width:329px;height:1px;background:#e6e6e6"></div>
 <div class="a" style="left:1487px;top:485.1px;width:329px;height:1px;background:#e6e6e6"></div>
 <div class="a" style="left:1487px;top:520.6px;width:329px;height:1px;background:#e6e6e6"></div>
 <div class="a" style="left:1487px;top:556.6px;width:329px;height:1px;background:#e6e6e6"></div>
 <div class="a" style="left:1487px;top:592.6px;width:329px;height:1px;background:#e6e6e6"></div>
 <div class="a" style="left:1487px;top:721.2px;width:329px;height:1px;background:#e6e6e6"></div>
 <div class="t ui" style="left:1520.0px;top:359.5px;">handleUserInput</div>
 <div class="t ui" style="right:300.7px;top:383.5px;color:#888;">maingamestate.js:119</div>
 <div class="t ui" style="left:1520.0px;top:419.8px;">update</div>
 <div class="t ui" style="right:300.7px;top:419.8px;color:#888;">maingamestate.js:90</div>
 <div class="t ui" style="left:1520.0px;top:455.8px;">update</div>
 <div class="t ui" style="right:300.7px;top:455.8px;color:#888;">phaser.min.js:3</div>
 <div class="t ui" style="left:1520.0px;top:491.8px;">updateLogic</div>
 <div class="t ui" style="right:300.7px;top:491.8px;color:#888;">phaser.min.js:3</div>
 <div class="t ui" style="left:1520.0px;top:527.8px;">update</div>
 <div class="t ui" style="right:300.7px;top:527.8px;color:#888;">phaser.min.js:3</div>
 <div class="t ui" style="left:1520.0px;top:563.8px;">updateRAF</div>
 <div class="t ui" style="right:300.7px;top:563.8px;color:#888;">phaser.min.js:3</div>
 <div class="t ui" style="left:1520.0px;top:692.2px;">updateRAF</div>
 <div class="t ui" style="right:300.7px;top:692.2px;color:#888;">phaser.min.js:3</div>
 <div class="t ui" style="left:1520.0px;top:599.7px;">window.requestAnimationFra…</div>
 <div class="t ui" style="right:300.7px;top:624.7px;color:#888;">phaser.min.js:3</div>
 <div class="t ui" style="left:1520.0px;top:728.5px;">window.requestAnimationFra…</div>
 <div class="t ui" style="right:300.7px;top:752.2px;color:#888;">phaser.min.js:3</div>
 <div class="a" style="left:1487px;top:670.25px;width:24px;height:1px;background:#ccc"></div>
 <div class="a" style="left:1803px;top:670.25px;width:13px;height:1px;background:#ccc"></div>
 <div class="t ui" style="left:1520.0px;top:659.7px;font-weight:bold;color:#9a9a9a">requestAnimationFrame (a…</div>
 <div class="t ui" style="left:1520.0px;top:788.5px;font-weight:bold;color:#9a9a9a">requestAnimationFrame (a…</div>
</div>

<!-- arrows -->
<svg class="a" style="left:0;top:0" width="2088" height="840">
 <g stroke="#a843bd" stroke-width="6.3" stroke-linecap="round" fill="none">
  <path d="M397.9 396.7L468 426.2"/>
  <path d="M347 725.3L693 554"/>
  <path d="M1864.8 70L1685 184.5"/>
 </g>
 <g fill="#a843bd">
  <path d="M472.3 412.1L482.9 432.5L460.8 439.2Z"/>
  <path d="M685 541.8L707.7 547.1L698.3 567.9Z"/>
  <path d="M1679 171.9L1671.4 192.5L1693.9 195.7Z"/>
 </g>
</svg>
</body></html>
